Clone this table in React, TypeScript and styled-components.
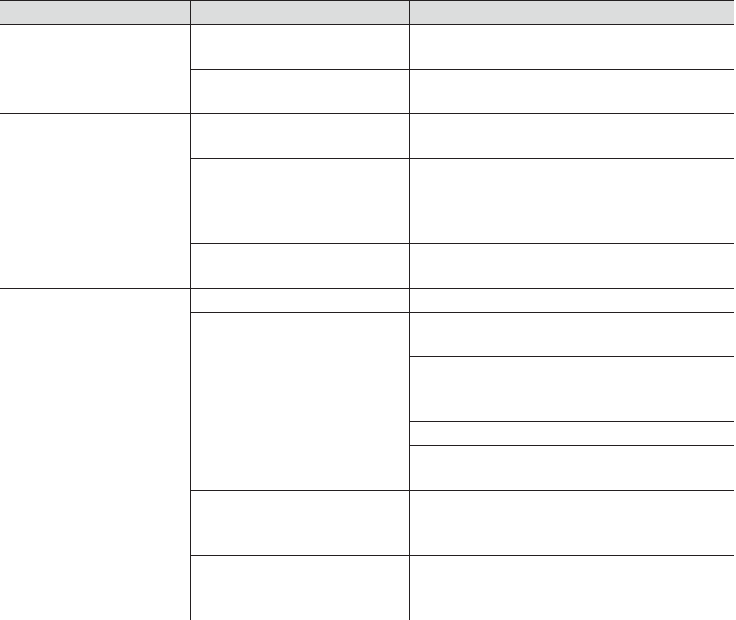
import React from "react";
import styled, { createGlobalStyle } from "styled-components";

const GlobalStyle = createGlobalStyle`
    html, body {
        margin: 0;
        padding: 0;
        background: #ffffff;
        overflow: hidden;
        font-family: "Liberation Sans", Arial, sans-serif;
    }
`

const Page = styled.div`
    width: 736px;
    height: 620px;
    overflow: hidden;
`

const Table = styled.table`
    width: 734px;
    table-layout: fixed;
    border-collapse: separate;
    border-spacing: 0;
    border-top: 1px solid #231f20;
    font-size: 12px;
    color: #231f20;
`

const Row = styled.tr<{ $h: number }>`
    height: ${p => p.$h}px;
`

const HeadCell = styled.th<{ $first?: boolean }>`
    background: #dcdddd;
    border-bottom: 1px solid #231f20;
    border-left: ${p => (p.$first ? "none" : "1px solid #231f20")};
    padding: 0;
    box-sizing: border-box;
`

const Cell = styled.td<{ $first?: boolean; $open?: boolean }>`
    border-bottom: ${p => (p.$open ? "none" : "1px solid #231f20")};
    border-left: ${p => (p.$first ? "none" : "1px solid #231f20")};
    padding: 0;
    box-sizing: border-box;
    vertical-align: top;
`

const App: React.FC = () => {
    return (
        <Page>
            <GlobalStyle />
            <Table>
                <colgroup>
                    <col style={{ width: 190 }} />
                    <col style={{ width: 219 }} />
                    <col style={{ width: 325 }} />
                </colgroup>
                <thead>
                    <Row $h={24}>
                        <HeadCell $first></HeadCell>
                        <HeadCell></HeadCell>
                        <HeadCell></HeadCell>
                    </Row>
                </thead>
                <tbody>
                    {/* group 1 */}
                    <Row $h={45}>
                        <Cell $first rowSpan={2}></Cell>
                        <Cell></Cell>
                        <Cell></Cell>
                    </Row>
                    <Row $h={44}>
                        <Cell></Cell>
                        <Cell></Cell>
                    </Row>

                    {/* group 2 */}
                    <Row $h={45}>
                        <Cell $first rowSpan={3}></Cell>
                        <Cell></Cell>
                        <Cell></Cell>
                    </Row>
                    <Row $h={85}>
                        <Cell></Cell>
                        <Cell></Cell>
                    </Row>
                    <Row $h={45}>
                        <Cell></Cell>
                        <Cell></Cell>
                    </Row>

                    {/* group 3 */}
                    <Row $h={24}>
                        <Cell $first $open rowSpan={7}></Cell>
                        <Cell></Cell>
                        <Cell></Cell>
                    </Row>
                    <Row $h={44}>
                        <Cell rowSpan={4}></Cell>
                        <Cell></Cell>
                    </Row>
                    <Row $h={65}>
                        <Cell></Cell>
                    </Row>
                    <Row $h={24}>
                        <Cell></Cell>
                    </Row>
                    <Row $h={45}>
                        <Cell></Cell>
                    </Row>
                    <Row $h={65}>
                        <Cell></Cell>
                        <Cell></Cell>
                    </Row>
                    <Row $h={80}>
                        <Cell $open></Cell>
                        <Cell $open></Cell>
                    </Row>
                </tbody>
            </Table>
        </Page>
    );
}

export default App;
